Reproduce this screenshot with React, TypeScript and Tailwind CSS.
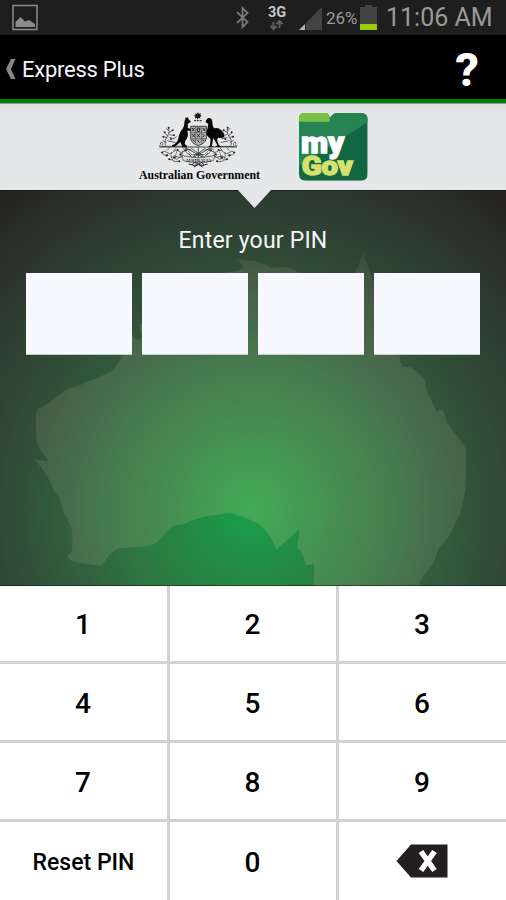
import React from "react";

const MAP =
  "M124 354L115 368Q108 374 92 380L78 386Q72 387 67 389L50 402Q44 407 39 408Q36 409 36 415V433Q36 440 38 445Q41 452 47 459V461Q40 461 34 459Q39 464 43 470L48 477L52 487L58 496Q61 500 61.500 505Q62 510 65 515L69 522Q72 528 72.500 535L72 552L68 555Q67 558 72 561Q76 563 80 563L101 566Q104 564 107 558Q111 552 115 550Q119 548 123 548L148 546Q153 545 157 542L166 532Q171 527 175 525.500L182 525Q192 520 203 517L229 513Q233 513 238 515L253 521Q260 523 266 531Q273 539 276 550L298 530Q300 529 299.500 533L297 548Q300 549 302 553L306 565L314 564V586H419Q420 580 423 576L433 564L438 550Q441 545 448 538L456 522Q461 512 463 503Q466 490 466 477V450Q465 446 461 441L447 423L444 412Q440 408 437 412Q436 411 435 408L426 389L425 380Q420 374 415 370Q411 367 408 367L403 367L401 363L399 354L390 320L373 280L363 253L356 272L350 300H320L300 275L295 270L285 267L271 268Q262 262 253 261L235 259L242 264Q245 268 238 271L222 273L200 290L180 300L160 315L142 323L139 325L142 337Q139 341 136 339L132 334V343Z";

function Backdrop() {
  return (
    <svg className="absolute inset-0" width="506" height="396" viewBox="0 190 506 396">
      <defs>
        <radialGradient id="sea" gradientUnits="userSpaceOnUse" cx="253" cy="510" r="420">
          <stop offset="0" stopColor="#19a04c" />
          <stop offset="0.18" stopColor="#268644" />
          <stop offset="0.3" stopColor="#2e7542" />
          <stop offset="0.44" stopColor="#325f3c" />
          <stop offset="0.53" stopColor="#32523a" />
          <stop offset="0.64" stopColor="#2f4634" />
          <stop offset="0.8" stopColor="#2c352d" />
          <stop offset="0.95" stopColor="#252322" />
          <stop offset="1" stopColor="#231f20" />
        </radialGradient>
        <radialGradient id="land" gradientUnits="userSpaceOnUse" cx="253" cy="510" r="280">
          <stop offset="0" stopColor="#43aa59" />
          <stop offset="0.2" stopColor="#459853" />
          <stop offset="0.36" stopColor="#478850" />
          <stop offset="0.5" stopColor="#477d50" />
          <stop offset="0.66" stopColor="#476c4b" />
          <stop offset="0.82" stopColor="#475e47" />
          <stop offset="1" stopColor="#3c4f3f" />
        </radialGradient>
      </defs>
      <rect y="190" width="506" height="396" fill="url(#sea)" />
      <path d={MAP} fill="url(#land)" />
      <path d="M0 190.500H506M0 585.500H506" stroke="#0b1a10" strokeOpacity="0.55" />
    </svg>
  );
}

function Sprig() {
  return (
    <g fill="none" stroke="#222" strokeWidth="2" strokeLinecap="round">
      <path d="M88 137Q96 142 112 139H152M92 133Q88 127 95 126Q101 130 98 136M106 136Q102 118 113 108Q121 96 116 84M113 108L104 98M111 113L101 110M117 98L126 92M115 91L109 86M119 104L130 106M118 113L131 116M112 122L124 125M108 127L99 122M131 116L139 111M125 125L136 127" />
      <path d="M94 157Q104 149 112 158Q119 165 128 157Q138 146 148 155Q154 162 164 153Q174 143 184 150M100 164L110 166M112 150L118 145M124 172Q134 164 142 170Q150 177 158 168M116 178L128 180Q134 188 146 184M132 151L138 145M148 163L154 171M170 158L178 164M160 147L170 146M141 178L148 172" />
      <path d="M124 158Q120 174 129 180M140 155Q134 164 138 180M158 152Q152 165 162 172M172 150L186 165" strokeWidth="1.500" />
      <g fill="#222" stroke="none">
        <circle cx="104" cy="97" r="3" /><circle cx="116" cy="83" r="3" /><circle cx="128" cy="91" r="3" />
        <circle cx="100" cy="110" r="3" /><circle cx="132" cy="106" r="3" /><circle cx="123" cy="117" r="3" />
        <circle cx="97" cy="158" r="3" /><circle cx="111" cy="166" r="3.500" /><circle cx="118" cy="178" r="3" />
        <circle cx="133" cy="173" r="3.500" /><circle cx="148" cy="184" r="3" /><circle cx="143" cy="150" r="3" />
        <circle cx="167" cy="151" r="3.500" /><circle cx="152" cy="163" r="3" />
      </g>
    </g>
  );
}

function Crest() {
  return (
    <svg width="140" height="86" viewBox="0 12 420 258" className="shrink-0">
      <path d="M204 36L206.500 42L213 39L210.500 45L216 48L210 50L211 56L205.500 53L203 59L200 53L195 56L196 50L191 47L197 45L195 39L201 42Z" fill="#151515" />
      <path d="M192 62H216" stroke="#333" strokeWidth="3.500" strokeDasharray="6 2.500" />
      <Sprig />
      <g transform="translate(409 0) scale(-1 1)"><Sprig /></g>
      <path d="M182 79H229V116Q226 130 205 137Q184 130 182 116Z" fill="#b4b5b7" stroke="#222" strokeWidth="2.500" />
      <path d="M182 98H229M197 79V130M214 79V130M183 116H227" stroke="#444" strokeWidth="2" />
      <g fill="none" stroke="#222" strokeWidth="3">
        <path d="M186 84L193 93M193 84L187 93M202 84H209V94H202ZM218 84L225 93M225 85L219 92M187 103L194 111M194 102L188 111M201 103L210 111M209 102L202 112M218 102Q226 106 218 112M202 120L209 128M188 119L194 124M217 120L223 122" />
      </g>
      <path d="M167 51L171 55L174 50L175 57Q183 62 182 67Q176 69 173 72Q175 79 173 84L181 86L183 92L172 92Q176 106 171 115Q163 124 164 132L171 137V142H156Q155 132 151 126L144 132Q139 139 128 141L126 136Q141 130 145 116Q147 98 158 86Q163 79 163 70Q163 62 166 58Z" fill="#050505" />
      <path d="M227 66Q229 54 238 54Q248 56 247 67Q246 77 252 85Q265 82 274 91Q284 99 283 112Q272 115 264 113L261 120L267 136L275 141H258L262 136L254 121L250 115L248 122L246 137L252 141H234L240 136L242 116Q227 108 230 95Q233 84 235 72Z" fill="#050505" />
      <path d="M88 141H321" stroke="#222" strokeWidth="2.500" />
      <path d="M168 144L241 184M241 144L168 184M184 145L205 160L226 145M205 142V188M188 164H221M190 170Q205 150 220 170M176 160L190 178M233 160L218 178" fill="none" stroke="#333" strokeWidth="2.500" />
      <path d="M155 166L170 169Q205 178 240 169L255 166L250 182Q229 188 205 188Q181 188 160 182Z" fill="#dadbdc" stroke="#333" strokeWidth="2" />
      <text x="205" y="185" textAnchor="middle" textLength="76" lengthAdjust="spacingAndGlyphs" fontSize="14" fontWeight="700" fontFamily="Liberation Serif, serif" fill="#222">AUSTRALIA</text>
      <path d="M176 192Q187 199 194 188M233 192Q222 199 215 188M192 201L216 186M218 201L194 186M188 197Q205 190 222 197" fill="none" stroke="#222" strokeWidth="3" />
      <text x="27" y="236" textLength="363" lengthAdjust="spacingAndGlyphs" fontSize="37" fontWeight="700" fontFamily="Liberation Serif, serif" fill="#050505">Australian Government</text>
    </svg>
  );
}

function MyGov() {
  return (
    <svg width="100" height="86" viewBox="0 12 300 258" className="shrink-0">
      <defs><clipPath id="folder"><path d="M42 62V56Q42 39 60 39H120Q129 39 133 49Q136 55 140 47Q145 39 156 39H228Q248 39 248 59V222Q248 242 228 242H62Q42 242 42 222Z" /></clipPath></defs>
      <g clipPath="url(#folder)">
        <path d="M40 37H250V244H40Z" fill="#126743" />
        <path d="M40 37H250V65L150 128L40 200Z" fill="#278352" />
        <path d="M40 37H128Q135 45 134 65H40Z" fill="#7bc142" />
      </g>
      <text x="48" y="159" textLength="130" lengthAdjust="spacingAndGlyphs" fontSize="90" fontWeight="900" fontFamily="Roboto, sans-serif" fill="#fff" stroke="#fff" strokeWidth="4">my</text>
      <text x="50" y="225" textLength="154" lengthAdjust="spacingAndGlyphs" fontSize="75" fontWeight="900" fontFamily="Roboto, sans-serif" fill="#d5e16d" stroke="#d5e16d" strokeWidth="4">Gov</text>
    </svg>
  );
}

function StatusBar() {
  return (
    <div className="flex h-[35px] items-start bg-[#1e1e1e] pl-3 text-[#9a9a9a]">
      <svg width="26" height="35" viewBox="0 0 26 35">
        <path d="M1 5.500H25V29.500H1Z" fill="none" stroke="#8c8c8c" strokeWidth="1.500" />
        <path d="M3.500 27V22L8.500 17L13 21.500L17 20L23 24V27Z" fill="#8c8c8c" />
      </svg>
      <svg className="ml-[197px]" width="16" height="35" viewBox="0 0 16 35">
        <path d="M2 12L12.500 22L7.500 27V8L12.500 13L2 23" fill="none" stroke="#777" strokeWidth="1.800" />
      </svg>
      <div className="ml-4 flex w-5 flex-col items-center pt-[5px]">
        <span className="text-[14.500px] leading-[15px] font-bold text-[#c6c6c6]">3G</span>
        <svg className="-mt-px shrink-0" width="16" height="12" viewBox="0 0 16 12">
          <path d="M4.500 3V9M1.500 7L4.500 10L7.500 7M10.500 9V2M7.500 5L10.500 2L13.500 5" fill="none" stroke="#5e5e5e" strokeWidth="2" />
        </svg>
      </div>
      <svg className="ml-3" width="25" height="35" viewBox="0 0 25 35">
        <path d="M23 7V30H7V23Z" fill="#444" />
        <path d="M0 30L6 24V30Z" fill="#b5b5b5" />
      </svg>
      <span className="ml-[2px] w-[33px] pt-[6px] text-[17px] leading-6 whitespace-nowrap">26%</span>
      <svg className="ml-px" width="17" height="35" viewBox="0 0 17 35">
        <path d="M0 7H5V5H12V7H17V30H0Z" fill="#444" />
        <path d="M0 24H17V30H0Z" fill="#99cc00" />
      </svg>
      <span className="ml-[9px] pt-px text-[25px] leading-[34px] whitespace-nowrap">11:06 AM</span>
    </div>
  );
}

function DeleteIcon() {
  return (
    <svg className="-translate-x-px" width="52" height="34" viewBox="0 0 52 34">
      <path d="M0.500 17L15 0.500H51.500V33.500H15Z" fill="#231f20" />
      <path d="M25 7.500L38.500 26.500M38.500 7.500L25 26.500" stroke="#fff" strokeWidth="5.600" />
    </svg>
  );
}

const ROWS: string[][] = [["1", "2", "3"], ["4", "5", "6"], ["7", "8", "9"], ["Reset PIN", "0", "delete"]];

function Keypad() {
  return (
    <div className="grid h-[314px] grid-cols-[167px_166px_167px] grid-rows-[75px_76px_76px_78px] gap-[3px] bg-[#d2d2d2]">
      {ROWS.flat().map((key) => (
        <button key={key} className="flex items-center justify-center bg-white text-[28px] leading-none font-medium text-black">
          {key === "delete" ? (
            <DeleteIcon />
          ) : key === "Reset PIN" ? (
            <span className="pt-0.5 text-[23px]">Reset PIN</span>
          ) : (
            <span className="pt-[3px] pr-px">{key}</span>
          )}
        </button>
      ))}
    </div>
  );
}

export default function App() {
  return (
    <div className="h-[900px] w-[506px] overflow-hidden bg-black font-['Roboto',sans-serif]">
      <StatusBar />
      <header className="flex h-16 items-center bg-black pr-[27px] pl-[5px] text-[#f6f6fc]">
        <svg className="mt-1" width="12" height="22" viewBox="0 0 12 22">
          <path d="M6 1H10.500L6 11L10.500 21H6L1 11Z" fill="#888" />
        </svg>
        <span className="mt-1 ml-[5px] text-[22px] tracking-[-0.25px]">Express Plus</span>
        <span className="mt-1 ml-auto text-[47px] leading-none font-extrabold text-white">?</span>
      </header>
      <div className="h-1 bg-[#008000]" />
      <div className="relative z-10 flex h-[87px] gap-[15px] border-t border-[#999] bg-[#e6e7e9] bg-linear-to-b from-[#dcdde0] to-[#e6e7e9] to-10% pl-[130px]">
        <Crest />
        <MyGov />
        <svg className="absolute top-[85px] left-[237px]" width="35" height="19" viewBox="0 0 35 19">
          <path d="M0 0H35L17.500 19Z" fill="#e6e7e9" />
        </svg>
      </div>
      <main className="relative h-[396px]">
        <Backdrop />
        <div className="relative flex flex-col items-center pt-[35px]">
          <h1 className="text-[23px] leading-8 tracking-[0.2px] text-[#f6f6fc]">Enter your PIN</h1>
          <div className="mt-4 flex gap-[10px]">
            {[0, 1, 2, 3].map((i) => (
              <div key={i} className="h-[82px] w-[106px] border-b border-[#c5cec8] bg-[#f8f9ff]" />
            ))}
          </div>
        </div>
      </main>
      <Keypad />
    </div>
  );
}
